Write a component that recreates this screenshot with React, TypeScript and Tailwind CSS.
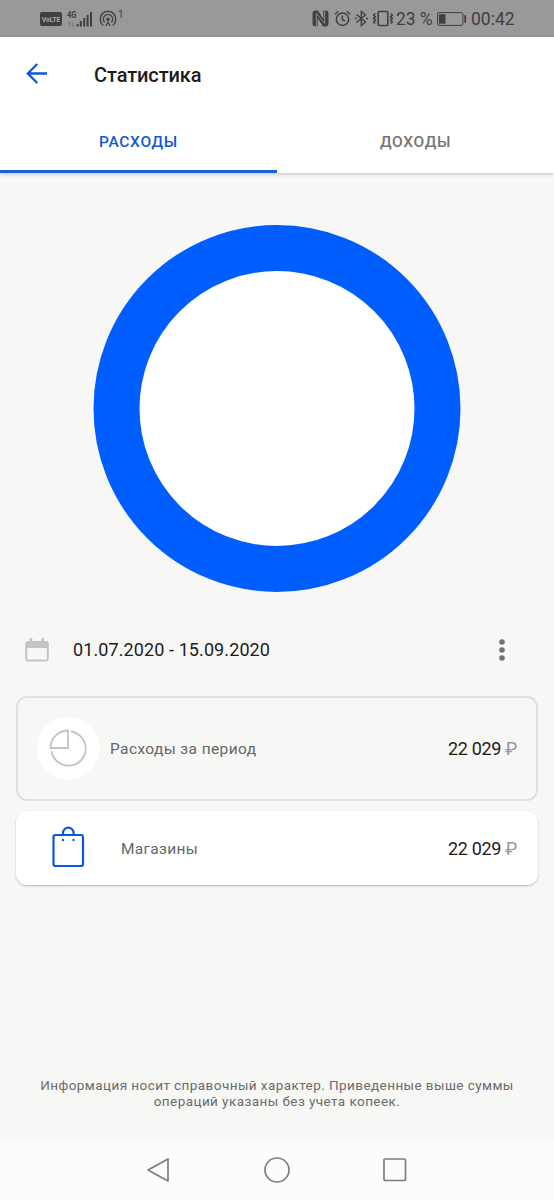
import React from "react";

function StatusBar() {
	return (
		<div className="flex h-[37px] items-center bg-[#999999] pl-10 text-[#404040]">
			<svg className="mt-px shrink-0 overflow-visible" width="22" height="14" viewBox="0 0 22 14">
				<rect width="22" height="14" rx="2" fill="currentColor" />
				<text x="2" y="10" fontSize="8" fontWeight="700" textLength="18" lengthAdjust="spacingAndGlyphs" fill="#b0b0b0">VoLTE</text>
			</svg>
			<svg className="ml-1 shrink-0 overflow-visible" width="28" height="18" viewBox="0 0 28 18">
				<text x="1" y="8" fontSize="9" fontWeight="700" textLength="9.5" lengthAdjust="spacingAndGlyphs" fill="currentColor">4G</text>
				<path d="M3.5 16.5v-4.5M2.2 13.2l1.3-1.4 1.3 1.4M6.8 11.8v4.5M5.5 15l1.3 1.4L8.1 15" fill="none" stroke="#707070" strokeWidth=".8" />
				<path d="M10.5 14h2v2.500h-2zM13.800 11h2v5.500h-2zM17.200 8h2v8.500h-2zM20.600 5h2v11.500h-2zM24 2h2v14.500h-2z" fill="currentColor" />
			</svg>
			<svg className="ml-[5px] shrink-0" width="18" height="18" viewBox="0 0 18 18" fill="none" stroke="currentColor" strokeWidth="1.5">
				<path d="M4.200 15.300a7.800 7.800 0 1 1 9.600 0" />
				<path d="M5.600 12.200a4.600 4.600 0 1 1 6.800 0" />
				<circle cx="9" cy="9.2" r="1.700" fill="currentColor" stroke="none" />
				<path d="m6.800 16 2.200-4 2.200 4" strokeWidth="1.3" />
			</svg>
			<span className="-mt-2 ml-[1px] text-[10px] leading-none">1</span>

			<div className="ml-auto flex items-center pr-[39px]">
				<svg width="17" height="17" viewBox="0 0 17 17">
					<path d="M3.500.5H6L11.300 9V.5h2.200c2 0 3 1 3 3v10c0 2-1 3-3 3H11L5.700 8v8.500H3.500c-2 0-3-1-3-3v-10c0-2 1-3 3-3z" fill="currentColor" />
					<path d="M4.300 17V3.500l8.400 10V0" fill="none" stroke="#999999" strokeWidth=".9" />
				</svg>
				<svg className="ml-[5px]" width="17" height="17" viewBox="0 0 17 17" fill="none" stroke="currentColor" strokeWidth="1.5">
					<circle cx="8.500" cy="9.200" r="6.200" />
					<path d="M8.300 5.500v4l2.700 1.700M.8 4.200 4.300 1.200M16.200 4.200l-3.500-3" />
				</svg>
				<svg className="ml-[3px]" width="15" height="17" viewBox="0 0 15 17" fill="none" stroke="currentColor" strokeWidth="1.4">
					<path d="m2.500 4.500 9 7.500-4.200 3.500v-14L11.500 5l-9 7.500" />
					<path d="M.8 8.500h2M12 8.500h2" />
				</svg>
				<svg className="ml-[3px]" width="22" height="17" viewBox="0 0 22 17" fill="none" stroke="currentColor" strokeWidth="1.600">
					<rect x="6.200" y="1.500" width="9.600" height="14" rx="1.200" />
					<path d="m3.200 3.500-1.500 1.700 1.700 1.700-1.700 1.700 1.700 1.700-1.700 1.700 1.500 1.500M18.800 3.500l1.500 1.700-1.700 1.700 1.700 1.700-1.700 1.700 1.700 1.700-1.500 1.500" />
				</svg>
				<span className="ml-[2px] mt-0.5 w-[36px] whitespace-nowrap text-[17.500px] leading-none tracking-[-0.1px]">23 %</span>
				<svg className="ml-[5px]" width="30" height="14" viewBox="0 0 30 14">
					<rect x=".6" y=".6" width="25.300" height="12.800" rx="1.500" fill="none" stroke="currentColor" />
					<path d="M2 2.300h6.500v9.400H2z" fill="currentColor" />
					<path d="M28.200 3.200v7.600" stroke="currentColor" strokeWidth="1.800" />
				</svg>
				<span className="ml-1 mt-0.5 w-[44px] whitespace-nowrap text-[17.500px] leading-none">00:42</span>
			</div>
		</div>
	)
}

function Header() {
	return (
		<header className="relative h-[136px] bg-white shadow-[0_1px_4px_rgba(0,0,0,0.22)]">
			<div className="flex h-[74px] items-center pl-[26px]">
				<svg width="22" height="22" viewBox="0 0 22 22" fill="none" stroke="#0b57e0" strokeWidth="2.300">
					<path d="M21 10.500H2M11.300 1 1.800 10.500l9.500 9.500" />
				</svg>
				<h1 className="ml-[46px] mt-0.5 text-[20px] font-medium leading-none tracking-[-0.1px] text-[#1c1c1c]">Статистика</h1>
			</div>
			<nav className="grid h-[62px] grid-cols-2 text-center text-[15.500px] font-medium leading-none tracking-[0.7px]">
				<a className="border-b-[3px] border-[#1a5fe0] pt-6 text-[#1259d8]">РАСХОДЫ</a>
				<a className="pt-6 text-[#757575]">ДОХОДЫ</a>
			</nav>
		</header>
	)
}

function Amount() {
	return (
		<span className="ml-auto whitespace-nowrap text-[18px] tracking-[-0.3px] text-[#1c1c1c]">
			22 029 <span className="text-[#999999]">₽</span>
		</span>
	)
}

export default function App() {
	return (
		<div className="flex h-[1200px] w-[554px] flex-col overflow-hidden bg-[#f7f7f5] font-['Roboto',sans-serif]">
			<StatusBar />
			<Header />
			<main className="flex flex-1 flex-col">
				<svg className="mt-[52px] self-center" width="368" height="367" viewBox="0 0 368 367">
					<circle cx="184" cy="183.500" r="160.500" fill="#ffffff" stroke="#005eff" strokeWidth="46" />
				</svg>

				<div className="mt-[34px] flex h-12 items-center pl-[25px]">
					<svg width="24" height="24" viewBox="0 0 24 24">
						<rect x="1.200" y="4" width="21.600" height="18.600" rx="2" fill="none" stroke="#c4c4c2" strokeWidth="2" />
						<path d="M1 4h22v6H1zM4.800 0h2.500v5H4.800zM16.500 0H19v5h-2.500z" fill="#c4c4c2" />
					</svg>
					<span className="-mt-px ml-6 text-[18px] tracking-[0.1px] text-[#1c1c1c]">01.07.2020 - 15.09.2020</span>
					<svg className="ml-auto mr-[49px]" width="6" height="22" viewBox="0 0 6 22" fill="#737373">
						<circle cx="3" cy="3" r="2.800" />
						<circle cx="3" cy="11" r="2.800" />
						<circle cx="3" cy="19" r="2.800" />
					</svg>
				</div>

				<section className="mx-4 mt-[22px] flex h-[105px] items-center rounded-[11px] border-2 border-[#e1e1df] pl-[19px] pr-[19px]">
					<div className="flex size-[63px] items-center justify-center rounded-full bg-white">
						<svg className="-ml-px -mt-px" width="38" height="38" viewBox="0 0 38 38" fill="none" stroke="#c4c4c2" strokeWidth="1.800">
							<path d="M19 1.500V19H1.500A17.500 17.500 0 0 1 19 1.500z" />
							<path d="M22 2.500A17.200 17.200 0 1 1 2.500 22" />
						</svg>
					</div>
					<span className="ml-[10px] mt-0.5 text-[15.500px] tracking-[0.38px] text-[#666666]">Расходы за период</span>
					<Amount />
				</section>

				<section className="mx-4 mt-[10px] flex h-[74px] items-center rounded-[11px] bg-white pl-[36px] pr-[21px] shadow-[0_1px_2px_rgba(0,0,0,0.25)]">
					<svg className="-mt-[3px]" width="33" height="42" viewBox="0 0 33 42" fill="none" stroke="#0b57e0" strokeWidth="2.200">
						<rect x="1.500" y="9" width="29.500" height="31" rx="2" />
						<path d="M11 9V7a5.300 5.300 0 0 1 10.600 0v2" />
						<circle cx="11" cy="14" r="1.200" fill="#0b57e0" stroke="none" />
						<circle cx="21.500" cy="14" r="1.200" fill="#0b57e0" stroke="none" />
					</svg>
					<span className="ml-[36px] mt-[3px] text-[15.500px] tracking-[0.3px] text-[#666666]">Магазины</span>
					<Amount />
				</section>

				<p className="mb-[32px] mt-auto text-center text-[13.500px] leading-[16px] tracking-[0.43px] text-[#6b6b6b]">
					Информация носит справочный характер. Приведенные выше суммы
					<br />
					операций указаны без учета копеек.
				</p>
			</main>
			<footer className="flex h-[59px] items-center justify-between bg-[#fcfcfc] pb-px pl-[146px] pr-[147px]">
				<svg width="25" height="26" viewBox="0 0 25 26" fill="none" stroke="#7d7d7d" strokeWidth="1.700" strokeLinejoin="round">
					<path d="M22 2v22L2 13z" />
				</svg>
				<svg width="26" height="26" viewBox="0 0 26 26" fill="none" stroke="#7d7d7d" strokeWidth="1.700">
					<circle cx="13" cy="13" r="12" />
				</svg>
				<svg width="24" height="24" viewBox="0 0 24 24" fill="none" stroke="#7d7d7d" strokeWidth="1.700">
					<rect x="1" y="1" width="21.500" height="21.500" rx="1" />
				</svg>
			</footer>
		</div>
	)
}
